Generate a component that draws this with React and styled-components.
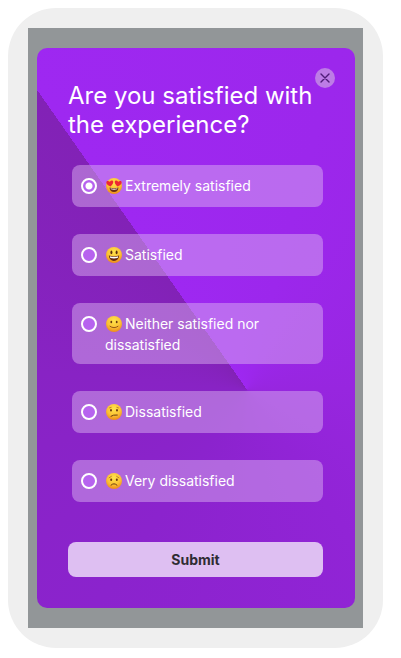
import React from "react";
import styled, { createGlobalStyle } from "styled-components";

const colors = {
  frame: "#efefef",
  screen: "#929698",
  text: "#ffffff",
  option: "rgba(223, 185, 243, 0.46)",
  submit: "#debff2",
  submitText: "#2f2c33",
  close: "#bd7ce6",
  closeIcon: "#4f1c78"
};

const GlobalStyle = createGlobalStyle`
  * {
    box-sizing: border-box;
  }
  body {
    margin: 0;
    background: white;
    font-family: Inter, "Open Sans", sans-serif;
  }
`;

const PageSC = styled.main`
  padding: 8px 18px 8px 8px;
`;

const PhoneSC = styled.div`
  max-width: 420px;
  padding: 20px;
  border-radius: 48px;
  background: ${colors.frame};
`;

const ScreenSC = styled.div`
  padding: 20px 8px 20px 9px;
  background: ${colors.screen};
`;

const CardSC = styled.form`
  padding: 20px 32px 31px 31px;
  border-radius: 10px;
  background: conic-gradient(
    from 325deg at 66% 61%,
    #9e28f1 0deg,
    #9c27ec 50deg,
    #9726df 125deg,
    #9124d6 180deg,
    #8b23cd 250deg,
    #8823c4 310deg,
    #8222b6 360deg
  );
  color: ${colors.text};
`;

const HeaderSC = styled.header`
  display: flex;
  flex-direction: column;
`;

const CloseSC = styled.button`
  display: flex;
  align-items: center;
  justify-content: center;
  align-self: flex-end;
  width: 20px;
  height: 20px;
  margin: 0 -12px -7px 0;
  padding: 0;
  border: none;
  border-radius: 50%;
  background: ${colors.close};
  cursor: pointer;
`;

const TitleSC = styled.h1`
  margin: 0;
  font-size: 24px;
  font-weight: 400;
  line-height: 29px;
`;

const OptionsSC = styled.fieldset`
  display: flex;
  flex-direction: column;
  gap: 27px;
  min-width: 0;
  margin: 26px 0 40px 4px;
  padding: 0;
  border: none;
`;

const OptionSC = styled.label`
  display: flex;
  align-items: flex-start;
  gap: 8px;
  min-height: 42px;
  padding: 10px 9px 9px;
  border-radius: 8px;
  background: ${colors.option};
  font-size: 14px;
  line-height: 21px;
  cursor: pointer;
`;

const RadioSC = styled.input`
  appearance: none;
  flex: none;
  width: 16px;
  height: 16px;
  margin: 3px 0 0;
  border: 2px solid white;
  border-radius: 50%;
  background: #b763ef;
  &:checked {
    background: radial-gradient(circle, white 3px, #b763ef 4px);
  }
`;

const EmojiSC = styled.svg`
  width: 18px;
  height: 18px;
  margin-right: 2px;
  vertical-align: -4px;
`;

const SubmitSC = styled.button`
  width: 100%;
  height: 35px;
  padding: 0;
  border: none;
  border-radius: 8px;
  background: ${colors.submit};
  color: ${colors.submitText};
  font-family: inherit;
  font-size: 14px;
  font-weight: 700;
  cursor: pointer;
`;

const heart = "M0 2.6C-5-.8-2.5-3.6 0-1.5 2.5-3.6 5-.8 0 2.6Z";

const faces = {
  love: (
    <>
      <path d="M4.5 10.5Q9 12 13.5 10.5Q13 15 9 15T4.5 10.5Z" fill="#6b2b12" />
      <path d="M5.5 11.3Q9 12.4 12.5 11.3L12 12.3Q9 13 6 12.3Z" fill="#fff" />
      <g fill="#ed2732">
        <path d={heart} transform="translate(5 6.5) rotate(-8) scale(1.2)" />
        <path d={heart} transform="translate(13 6.5) rotate(8) scale(1.2)" />
      </g>
    </>
  ),
  grin: (
    <>
      <ellipse cx="6.4" cy="6.4" rx="1" ry="1.8" fill="#5b2d10" />
      <ellipse cx="11.6" cy="6.4" rx="1" ry="1.8" fill="#5b2d10" />
      <path d="M3.8 9.6Q9 11 14.2 9.6Q13.5 15 9 15T3.8 9.6Z" fill="#652a10" />
      <path d="M4.8 10.3Q9 11.3 13.2 10.3L12.7 12Q9 12.8 5.3 12Z" fill="#fff" />
    </>
  ),
  smile: (
    <>
      <ellipse cx="6.3" cy="7" rx=".9" ry="1.3" fill="#6b3a10" />
      <ellipse cx="11.7" cy="7" rx=".9" ry="1.3" fill="#6b3a10" />
      <path d="M5 11.3Q9 14.2 13 11.3" fill="none" stroke="#8b4c14" strokeWidth=".9" strokeLinecap="round" />
    </>
  ),
  confused: (
    <>
      <ellipse cx="6" cy="7.3" rx=".9" ry="1.3" fill="#6b3a10" />
      <ellipse cx="12" cy="7.3" rx=".9" ry="1.3" fill="#6b3a10" />
      <path d="M4.2 5L6.5 4.3M11.5 4.3L13.8 5" stroke="#a5631a" strokeWidth=".7" />
      <path d="M6 13.2Q8 11.6 12.3 12" fill="none" stroke="#6b3a10" strokeLinecap="round" />
    </>
  ),
  worried: (
    <>
      <ellipse cx="6.2" cy="7.7" rx="1" ry="1.3" fill="#6b3a10" />
      <ellipse cx="11.8" cy="7.7" rx="1" ry="1.3" fill="#6b3a10" />
      <path d="M3.8 6L6.7 4.2M11.3 4.2L14.2 6" stroke="#a5631a" strokeWidth=".7" />
      <path d="M6 13.2Q9 10.2 12 13.2" fill="none" stroke="#6b3a10" strokeLinecap="round" />
    </>
  )
};

const options = [
  { value: "extremely-satisfied", face: "love", label: "Extremely satisfied" },
  { value: "satisfied", face: "grin", label: "Satisfied" },
  { value: "neutral", face: "smile", label: "Neither satisfied nor dissatisfied" },
  { value: "dissatisfied", face: "confused", label: "Dissatisfied" },
  { value: "very-dissatisfied", face: "worried", label: "Very dissatisfied" }
];

const Emoji = ({ face }) => (
  <EmojiSC viewBox="0 0 18 18" aria-hidden="true">
    <defs>
      <radialGradient id={`skin-${face}`} cx=".5" cy=".3" r=".7">
        <stop offset="0" stopColor="#ffe44d" />
        <stop offset=".6" stopColor="#fbc233" />
        <stop offset="1" stopColor="#ec8a1c" />
      </radialGradient>
    </defs>
    <circle cx="9" cy="9" r="8" fill={`url(#skin-${face})`} />
    {faces[face]}
  </EmojiSC>
);

class App extends React.Component {
  constructor() {
    super();
    this.state = {
      answer: "extremely-satisfied"
    };
  }

  changeHandler = ev => {
    this.setState({ answer: ev.target.value });
  };

  submitHandler = ev => {
    ev.preventDefault();
  };

  render() {
    return (
      <PageSC>
        <GlobalStyle />
        <PhoneSC>
          <ScreenSC>
            <CardSC onSubmit={this.submitHandler}>
              <HeaderSC>
                <CloseSC type="button" aria-label="Close">
                  <svg width="10" height="10" viewBox="0 0 10 10" aria-hidden="true">
                    <path
                      d="M1 1L9 9M9 1L1 9"
                      stroke={colors.closeIcon}
                      strokeWidth="1.4"
                      strokeLinecap="round"
                    />
                  </svg>
                </CloseSC>
                <TitleSC id="question">Are you satisfied with the experience?</TitleSC>
              </HeaderSC>
              <OptionsSC aria-labelledby="question">
                {options.map(({ value, face, label }) => (
                  <OptionSC key={value} htmlFor={value}>
                    <RadioSC
                      type="radio"
                      id={value}
                      name="answer"
                      value={value}
                      checked={this.state.answer === value}
                      onChange={this.changeHandler}
                    />
                    <span>
                      <Emoji face={face} />
                      {label}
                    </span>
                  </OptionSC>
                ))}
              </OptionsSC>
              <SubmitSC type="submit">Submit</SubmitSC>
            </CardSC>
          </ScreenSC>
        </PhoneSC>
      </PageSC>
    );
  }
}

export default App;
